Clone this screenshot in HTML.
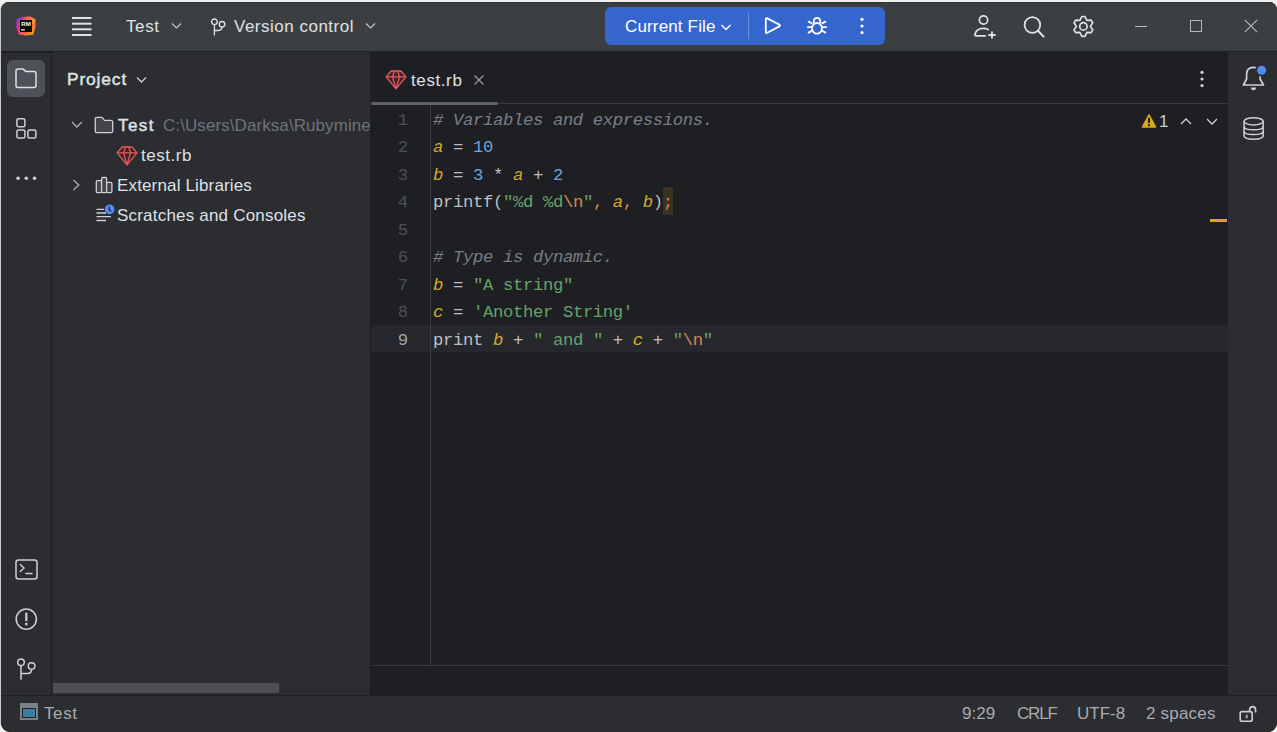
<!DOCTYPE html>
<html><head><meta charset="utf-8">
<style>
*{margin:0;padding:0;box-sizing:border-box}
html,body{width:1277px;height:732px;overflow:hidden;background:#f0f0f0}
body{font-family:"Liberation Sans",sans-serif;position:relative}
.a{position:absolute}
svg{position:absolute;overflow:visible}
#win{position:absolute;left:1px;top:2px;width:1276px;height:730px;border-radius:8px 8px 9px 9px;overflow:hidden;background:#2b2d30}
#pg{position:absolute;left:-1px;top:-2px;width:1277px;height:732px}
.tt{position:absolute;color:#dfe1e5;font-size:17px;white-space:nowrap;line-height:20px}
#code{position:absolute;left:371px;top:105px;width:857px;height:560px;overflow:hidden}
.ln{position:absolute;left:0;width:37px;text-align:right;color:#4b5059;font-size:17.3px;font-family:"Liberation Mono",monospace;line-height:27px}
.cd{position:absolute;left:62px;color:#bcbec4;font-size:17.3px;letter-spacing:-0.38px;font-family:"Liberation Mono",monospace;white-space:pre;line-height:27px}
.cm{color:#7a7e85;font-style:italic}
.v{color:#d6aa30;font-style:italic}
.n{color:#6aa3e0}
.s{color:#67a26a}
.e{color:#d88a4c}
</style></head><body>
<div class="a" style="left:0;top:8px;width:1px;height:716px;background:#c8c8c8"></div>
<div id="win"><div id="pg">
<!-- title bar -->
<div class="a" style="left:0;top:0;width:1277px;height:51px;background:#3c3f41"></div>
<div class="a" style="left:0;top:2px;width:1277px;height:1px;background:#313335"></div>
<div class="a" style="left:0;top:51px;width:1277px;height:2px;background:#1e1f22"></div>
<!-- left stripe -->
<div class="a" style="left:0;top:53px;width:51px;height:642px;background:#2b2d30"></div>
<div class="a" style="left:51px;top:53px;width:1px;height:642px;background:#1e1f22"></div>
<!-- project panel -->
<div class="a" style="left:52px;top:52px;width:318px;height:643px;background:#2b2d30;overflow:hidden" id="proj"></div>
<div class="a" style="left:370px;top:52px;width:1px;height:643px;background:#1e1f22"></div>
<!-- editor -->
<div class="a" style="left:371px;top:52px;width:857px;height:643px;background:#1e1f22"></div>
<div class="a" style="left:371px;top:103px;width:857px;height:1px;background:#393b40"></div>
<div class="a" style="left:371px;top:665px;width:857px;height:1px;background:#393b40"></div>
<div class="a" style="left:430px;top:104px;width:1px;height:561px;background:#393b40"></div>
<!-- right stripe -->
<div class="a" style="left:1228px;top:52px;width:49px;height:643px;background:#2b2d30"></div>
<!-- status -->
<div class="a" style="left:0;top:695px;width:1277px;height:1px;background:#1e1f22"></div>
<div class="a" style="left:0;top:696px;width:1277px;height:36px;background:#2b2d30"></div>

<!-- ===== TITLE CONTENT ===== -->
<!-- logo -->
<svg style="left:16px;top:16px" width="20" height="20" viewBox="0 0 20 20">
  <defs><linearGradient id="lg" x1="0" y1="0" x2="1" y2="1"><stop offset="0" stop-color="#7b3cf6"/><stop offset="0.45" stop-color="#fc2f73"/><stop offset="0.8" stop-color="#fd8b1c"/></linearGradient>
  <linearGradient id="lg2" x1="0" y1="0" x2="1" y2="0.3"><stop offset="0" stop-color="#fc3d6a"/><stop offset="1" stop-color="#fd9a1c"/></linearGradient></defs>
  <path d="M0.5 3.5 L6 1 L8 2.2 L14.5 0.5 L19.5 3.5 L19.5 11 L17.5 18.5 L10 19.5 L3 18.5 L0.5 12 Z" fill="url(#lg)"/>
  <path d="M6 1 L14.5 0.5 L19.5 3.5 L18 9 Z" fill="url(#lg2)"/>
  <rect x="4" y="4" width="12" height="12" fill="#000"/>
  <rect x="5" y="13.3" width="4" height="1.2" fill="#fff"/>
  <text x="5.2" y="10.2" font-family="Liberation Sans" font-weight="bold" font-size="6.2" fill="#fff">RM</text>
</svg>
<!-- hamburger -->
<svg style="left:72px;top:17px" width="20" height="20" viewBox="0 0 20 20">
  <g fill="#dfe1e5"><rect x="0" y="0" width="19.5" height="2"/><rect x="0" y="5.7" width="19.5" height="2"/><rect x="0" y="11.3" width="19.5" height="2"/><rect x="0" y="17" width="19.5" height="2"/></g>
</svg>
<div class="tt" style="left:126px;top:17px;letter-spacing:0.6px">Test</div>
<svg style="left:171px;top:22px" width="11" height="8" viewBox="0 0 11 8"><path d="M1 1.5 L5.5 6 L10 1.5" fill="none" stroke="#c4c7cc" stroke-width="1.15"/></svg>
<!-- git icon -->
<svg style="left:210px;top:16.5px" width="16" height="20" viewBox="0 0 16 20">
  <g fill="none" stroke="#dfe1e5" stroke-width="1.3"><circle cx="4.4" cy="4.8" r="2.8"/><circle cx="12" cy="7.3" r="2.8"/><path d="M4.4 7.6 V18.5 M4.4 13.5 H8.5 Q12 13.5 12 10.1"/></g>
</svg>
<div class="tt" style="left:234px;top:17px;letter-spacing:0.5px">Version control</div>
<svg style="left:365px;top:22px" width="11" height="8" viewBox="0 0 11 8"><path d="M1 1.5 L5.5 6 L10 1.5" fill="none" stroke="#c4c7cc" stroke-width="1.15"/></svg>

<!-- run widget -->
<div class="a" style="left:605px;top:7.3px;width:280px;height:37.3px;border-radius:6px;background:#3566ce"></div>
<div class="a" style="left:748px;top:13px;width:1px;height:26px;background:#6a8fdb"></div>
<div class="tt" style="left:625px;top:17px;color:#fff;letter-spacing:0.15px">Current File</div>
<svg style="left:720px;top:23px" width="12" height="9" viewBox="0 0 12 9"><path d="M1.5 2 L6 6.5 L10.5 2" fill="none" stroke="#fff" stroke-width="1.4"/></svg>
<svg style="left:764px;top:17px" width="18" height="18" viewBox="0 0 18 18"><path d="M1.8 2.3 Q1.8 0.6 3.3 1.4 L15.3 7.6 Q16.6 8.5 15.3 9.4 L3.3 15.8 Q1.8 16.6 1.8 14.9 Z" fill="none" stroke="#fff" stroke-width="1.8" stroke-linejoin="round"/></svg>
<svg style="left:807px;top:17px" width="20" height="18" viewBox="0 0 20 18">
  <g fill="none" stroke="#fff" stroke-width="1.8" stroke-linecap="round"><path d="M6.7 5.2 Q6.7 0.9 10 0.9 Q13.3 0.9 13.3 5.2"/><ellipse cx="10" cy="11.3" rx="5" ry="5.3"/><path d="M1.6 4.6 L4.8 6.3 M18.4 4.6 L15.2 6.3 M0.9 10.2 H4.6 M19.1 10.2 H15.4 M1.6 15.6 L4.8 13.8 M18.4 15.6 L15.2 13.8"/></g>
</svg>
<svg style="left:858px;top:17px" width="8" height="18" viewBox="0 0 8 18"><g fill="#fff"><circle cx="4" cy="2.3" r="1.6"/><circle cx="4" cy="9" r="1.6"/><circle cx="4" cy="15.6" r="1.6"/></g></svg>

<!-- right title icons -->
<svg style="left:973px;top:14px" width="26" height="26" viewBox="0 0 26 26">
  <g fill="none" stroke="#dfe1e5" stroke-width="1.7" stroke-linecap="round"><circle cx="10.5" cy="6" r="4.2"/><path d="M12.2 21.8 H3.2 Q1.6 21.8 1.9 20.3 Q3.3 14.4 10.6 14.4 Q13.6 14.4 15.3 15.6"/><path d="M19 17.4 V24.6 M15.4 21 H22.6" stroke-width="1.9" stroke-linecap="butt"/></g>
</svg>
<svg style="left:1022px;top:15px" width="24" height="24" viewBox="0 0 24 24">
  <g fill="none" stroke="#dfe1e5" stroke-width="1.75" stroke-linecap="round"><circle cx="10.4" cy="10" r="7.8"/><path d="M16 15.8 L21.6 21.6" stroke-width="2"/></g>
</svg>
<svg style="left:1072px;top:15px" width="23" height="23" viewBox="0 0 23 23">
  <g fill="none" stroke="#dfe1e5" stroke-width="1.7" stroke-linejoin="round"><path d="M9.84 1.52 L12.96 1.52 L14.90 5.34 L19.17 5.11 L20.74 7.82 L18.40 11.40 L20.74 14.98 L19.17 17.69 L14.90 17.46 L12.96 21.28 L9.84 21.28 L7.90 17.46 L3.63 17.69 L2.06 14.98 L4.40 11.40 L2.06 7.82 L3.63 5.11 L7.90 5.34 Z"/><circle cx="11.4" cy="11.4" r="3.7"/></g>
</svg>
<div class="a" style="left:1135px;top:26px;width:12px;height:1px;background:#b9b9b9"></div>
<div class="a" style="left:1190px;top:20px;width:12px;height:12px;border:1px solid #b9b9b9"></div>
<svg style="left:1244px;top:19px" width="14" height="14" viewBox="0 0 14 14"><path d="M0.8 0.8 L13.2 13.2 M13.2 0.8 L0.8 13.2" stroke="#b9b9b9" stroke-width="1.1"/></svg>

<!-- ===== LEFT STRIPE ===== -->
<div class="a" style="left:7px;top:60px;width:38px;height:37px;border-radius:6px;background:#4e5157"></div>
<svg style="left:15px;top:68px" width="22" height="21" viewBox="0 0 22 21">
  <path d="M1 3 Q1 1 3 1 H8.2 L10.8 3.6 H19 Q21 3.6 21 5.6 V17.5 Q21 19.5 19 19.5 H3 Q1 19.5 1 17.5 Z" fill="none" stroke="#dfe1e5" stroke-width="1.5" stroke-linejoin="round"/>
</svg>
<svg style="left:15px;top:117px" width="24" height="23" viewBox="0 0 24 23">
  <g fill="none" stroke="#ced0d6" stroke-width="1.5"><rect x="1.9" y="1.8" width="8" height="8" rx="1.6"/><rect x="1.9" y="13" width="8" height="8" rx="1.6"/><rect x="12.9" y="13" width="8" height="8" rx="1.6"/></g>
</svg>
<svg style="left:14px;top:174px" width="26" height="8" viewBox="0 0 26 8"><g fill="#ced0d6"><circle cx="4.1" cy="4.2" r="1.8"/><circle cx="12.3" cy="4.2" r="1.8"/><circle cx="20.5" cy="4.2" r="1.8"/></g></svg>
<!-- terminal -->
<svg style="left:15px;top:559px" width="23" height="21" viewBox="0 0 23 21">
  <g fill="none" stroke="#ced0d6" stroke-width="1.5"><rect x="1" y="1" width="21" height="19" rx="2.5"/><path d="M5.3 5.5 L9 9 L5.3 12.5 M11 14.5 H17" stroke-linecap="round"/></g>
</svg>
<!-- problems -->
<svg style="left:15px;top:608px" width="23" height="23" viewBox="0 0 23 23">
  <g fill="none" stroke="#ced0d6" stroke-width="1.6"><circle cx="11.3" cy="11.1" r="10.1"/><path d="M11.3 5.6 V12.3" stroke-width="2.2" stroke-linecap="round"/></g><circle cx="11.3" cy="16.1" r="1.4" fill="#ced0d6"/>
</svg>
<!-- git -->
<svg style="left:16px;top:658px" width="21" height="23" viewBox="0 0 21 23">
  <g fill="none" stroke="#ced0d6" stroke-width="1.5"><circle cx="5" cy="4.2" r="3.3"/><circle cx="15.6" cy="8" r="3.3"/><path d="M5 7.5 V21.8 M5 15.5 H11.5 Q15.6 15.5 15.6 11.3"/></g>
</svg>

<!-- ===== PROJECT PANEL ===== -->
<div class="tt" style="left:67px;top:69px;font-size:17.4px;-webkit-text-stroke:0.45px #dfe1e5;letter-spacing:0.85px">Project</div>
<svg style="left:136px;top:76px" width="12" height="8" viewBox="0 0 12 8"><path d="M1 1.5 L5.5 6 L10 1.5" fill="none" stroke="#ced0d6" stroke-width="1.3"/></svg>
<div class="a" style="left:52px;top:104px;width:318px;height:130px;overflow:hidden">
  <div class="a" style="left:-52px;top:-104px;width:1277px;height:400px">
  <svg style="left:71px;top:121px" width="12" height="8" viewBox="0 0 12 8"><path d="M1 1 L5.9 6 L10.8 1" fill="none" stroke="#a8adb5" stroke-width="1.3"/></svg>
  <svg style="left:94px;top:116px" width="20" height="18" viewBox="0 0 20 18">
    <path d="M1.3 3 Q1.3 1.3 3 1.3 H8 L10.5 4.3 H17 Q18.7 4.3 18.7 6 V15 Q18.7 16.7 17 16.7 H3 Q1.3 16.7 1.3 15 Z" fill="#43454a" stroke="#ced0d6" stroke-width="1.3" stroke-linejoin="round"/>
  </svg>
  <div class="tt" style="left:118px;top:116px;-webkit-text-stroke:0.45px #dfe1e5;letter-spacing:1.45px">Test</div>
  <div class="tt" style="left:163px;top:116px;color:#6f737a;letter-spacing:0.08px">C:\Users\Darksa\RubymineProjects\Test</div>
  <svg style="left:111px;top:142px" width="32" height="28" viewBox="0 0 32 28">
    <g stroke="#e55b5b" stroke-width="1.3" stroke-linejoin="round" fill="none"><path d="M11.1 5 H21 L26 10.9 L16.05 22.9 L6.1 10.9 Z" fill="#3d2629"/><path d="M6.1 10.9 H26 M14.3 5 L12.6 10.9 L16.05 22.9 M17.8 5 L19.5 10.9 L16.05 22.9"/></g>
  </svg>
  <div class="tt" style="left:141px;top:146px;letter-spacing:0.55px">test.rb</div>
  <svg style="left:72px;top:179px" width="9" height="13" viewBox="0 0 9 13"><path d="M1.5 1 L6.8 6 L1.5 11" fill="none" stroke="#a8adb5" stroke-width="1.3"/></svg>
  <svg style="left:95px;top:176px" width="18" height="18" viewBox="0 0 18 18">
    <g fill="#43454a" stroke="#ced0d6" stroke-width="1.3" stroke-linejoin="round"><rect x="1.3" y="4.6" width="5.3" height="12" rx="1"/><rect x="6.6" y="1.5" width="5" height="15.1" rx="1"/><rect x="11.6" y="6.4" width="5.3" height="10.2" rx="1"/></g>
  </svg>
  <div class="tt" style="left:117px;top:176px;letter-spacing:0.15px">External Libraries</div>
  <svg style="left:95px;top:203px" width="20" height="20" viewBox="0 0 20 20">
    <g stroke="#ced0d6" stroke-width="1.3"><path d="M1.5 6.4 H9 M1.5 10 H11 M1.5 13.7 H16 M1.5 17.5 H11"/></g>
    <circle cx="14.6" cy="6.4" r="4.8" fill="#548af7"/><path d="M14.2 3.6 V6.8 L16.2 8.4" fill="none" stroke="#1e1f22" stroke-width="1.2"/>
  </svg>
  <div class="tt" style="left:117px;top:206px;letter-spacing:0.2px">Scratches and Consoles</div>
  </div>
</div>
<!-- horizontal scrollbar -->
<div class="a" style="left:53px;top:683px;width:226px;height:10px;background:#4d4f55"></div>

<!-- ===== EDITOR ===== -->
<svg style="left:380px;top:66px" width="32" height="28" viewBox="0 0 32 28">
  <g stroke="#e55b5b" stroke-width="1.3" stroke-linejoin="round" fill="none"><path d="M11.1 5 H21 L26 10.9 L16.05 22.9 L6.1 10.9 Z" fill="#3d2629"/><path d="M6.1 10.9 H26 M14.3 5 L12.6 10.9 L16.05 22.9 M17.8 5 L19.5 10.9 L16.05 22.9"/></g>
</svg>
<div class="tt" style="left:411px;top:71px;letter-spacing:0.6px">test.rb</div>
<svg style="left:473px;top:74px" width="12" height="12" viewBox="0 0 12 12"><path d="M1.5 1.5 L10.5 10.5 M10.5 1.5 L1.5 10.5" stroke="#9a9da3" stroke-width="1.2"/></svg>
<div class="a" style="left:371px;top:101.5px;width:127px;height:3.5px;border-radius:2px;background:#5f6268"></div>
<svg style="left:1198px;top:70px" width="8" height="18" viewBox="0 0 8 18"><g fill="#ced0d6"><circle cx="4" cy="2.3" r="1.6"/><circle cx="4" cy="9" r="1.6"/><circle cx="4" cy="15.6" r="1.6"/></g></svg>

<!-- current line -->
<div class="a" style="left:371px;top:325px;width:857px;height:27px;background:#26282e"></div>
<div class="a" style="left:430px;top:325px;width:1px;height:27px;background:#393b40"></div>
<!-- semicolon highlight -->
<div class="a" style="left:663px;top:187px;width:10px;height:28px;background:#3b3223"></div>

<div id="code">
  <div class="ln" style="top:2px">1</div>
  <div class="cd" style="top:2px"><span class="cm"># Variables and expressions.</span></div>
  <div class="ln" style="top:29px">2</div>
  <div class="cd" style="top:29px"><span class="v">a</span> = <span class="n">10</span></div>
  <div class="ln" style="top:57px">3</div>
  <div class="cd" style="top:57px"><span class="v">b</span> = <span class="n">3</span> * <span class="v">a</span> + <span class="n">2</span></div>
  <div class="ln" style="top:84px">4</div>
  <div class="cd" style="top:84px">printf(<span class="s">"%d %d</span><span class="e">\n</span><span class="s">"</span><span class="e">, </span><span class="v">a</span><span class="e">, </span><span class="v">b</span>)<span class="e">;</span></div>
  <div class="ln" style="top:112px">5</div>
  <div class="ln" style="top:139px">6</div>
  <div class="cd" style="top:139px"><span class="cm"># Type is dynamic.</span></div>
  <div class="ln" style="top:167px">7</div>
  <div class="cd" style="top:167px"><span class="v">b</span> = <span class="s">"A string"</span></div>
  <div class="ln" style="top:194px">8</div>
  <div class="cd" style="top:194px"><span class="v">c</span> = <span class="s">'Another String'</span></div>
  <div class="ln" style="top:222px;color:#a1a3ab">9</div>
  <div class="cd" style="top:222px">print <span class="v">b</span> + <span class="s">" and "</span> + <span class="v">c</span> + <span class="s">"</span><span class="e">\n</span><span class="s">"</span></div>
</div>

<!-- inspection widget -->
<svg style="left:1141px;top:113px" width="16" height="15" viewBox="0 0 16 15">
  <path d="M8 1.2 L15 14.2 H1 Z" fill="#d6a81c" stroke="#d6a81c" stroke-width="1" stroke-linejoin="round"/>
  <path d="M8 4.8 V10" stroke="#1e1f22" stroke-width="2"/><rect x="7" y="11.2" width="2" height="2" fill="#1e1f22"/>
</svg>
<div class="tt" style="left:1159px;top:112px;color:#c9ccd3;font-size:17px">1</div>
<svg style="left:1180px;top:117px" width="12" height="9" viewBox="0 0 12 9"><path d="M1 7 L6 2 L11 7" fill="none" stroke="#ced0d6" stroke-width="1.3"/></svg>
<svg style="left:1206px;top:117px" width="12" height="9" viewBox="0 0 12 9"><path d="M1 2 L6 7 L11 2" fill="none" stroke="#ced0d6" stroke-width="1.3"/></svg>
<!-- error stripe mark -->
<div class="a" style="left:1210px;top:219px;width:17px;height:3px;background:#d6a521"></div>

<!-- ===== RIGHT STRIPE ===== -->
<svg style="left:1236px;top:60px" width="36" height="36" viewBox="0 0 36 36">
  <path d="M7.4 25 H27.5 L24.1 19 V14.5 Q24.1 7.4 17.5 7.4 Q10.6 7.4 10.6 14.5 V19 Z" fill="none" stroke="#ced0d6" stroke-width="1.7" stroke-linejoin="round"/>
  <path d="M15 27.6 H20 Q20 30.3 17.5 30.3 Q15 30.3 15 27.6 Z" fill="#ced0d6"/>
  <circle cx="25.6" cy="10.3" r="6.3" fill="#2b2d30"/><circle cx="25.6" cy="10.3" r="4.5" fill="#548af7"/>
</svg>
<svg style="left:1242px;top:116px" width="24" height="26" viewBox="0 0 24 26">
  <g fill="none" stroke="#ced0d6" stroke-width="1.5"><ellipse cx="11.6" cy="5.3" rx="9.6" ry="3.6"/><path d="M2 5.3 V19.5 Q2 23.2 11.6 23.2 Q21.2 23.2 21.2 19.5 V5.3 M2 10.2 Q2 13.8 11.6 13.8 Q21.2 13.8 21.2 10.2 M2 15 Q2 18.6 11.6 18.6 Q21.2 18.6 21.2 15"/></g>
</svg>

<!-- ===== STATUS BAR ===== -->
<svg style="left:20px;top:703px" width="18" height="17" viewBox="0 0 18 17">
  <rect x="0" y="0" width="18" height="17" fill="#7b8189"/><rect x="2" y="5" width="14" height="10" fill="#1f2326"/><rect x="3" y="6" width="12" height="8" fill="#3a7f9c"/>
</svg>
<div class="tt" style="left:44px;top:704px;color:#a8abb0;letter-spacing:0.6px">Test</div>
<div class="tt" style="left:962px;top:704px;color:#a8abb0">9:29</div>
<div class="tt" style="left:1017px;top:704px;color:#a8abb0;letter-spacing:-1.2px">CRLF</div>
<div class="tt" style="left:1077px;top:704px;color:#a8abb0">UTF-8</div>
<div class="tt" style="left:1146px;top:704px;color:#a8abb0;letter-spacing:0.2px">2 spaces</div>
<svg style="left:1238px;top:705px" width="20" height="18" viewBox="0 0 20 18">
  <g fill="none" stroke="#ced0d6" stroke-width="1.6"><rect x="2.2" y="6.6" width="12" height="9.7" rx="1.8"/><path d="M11.6 6.6 V5 Q11.6 1.6 14.6 1.6 Q17.6 1.6 17.6 5 V7.6"/></g><rect x="7.7" y="9.8" width="2" height="3.4" fill="#a8abb0"/>
</svg>

</div></div>
</body></html>
